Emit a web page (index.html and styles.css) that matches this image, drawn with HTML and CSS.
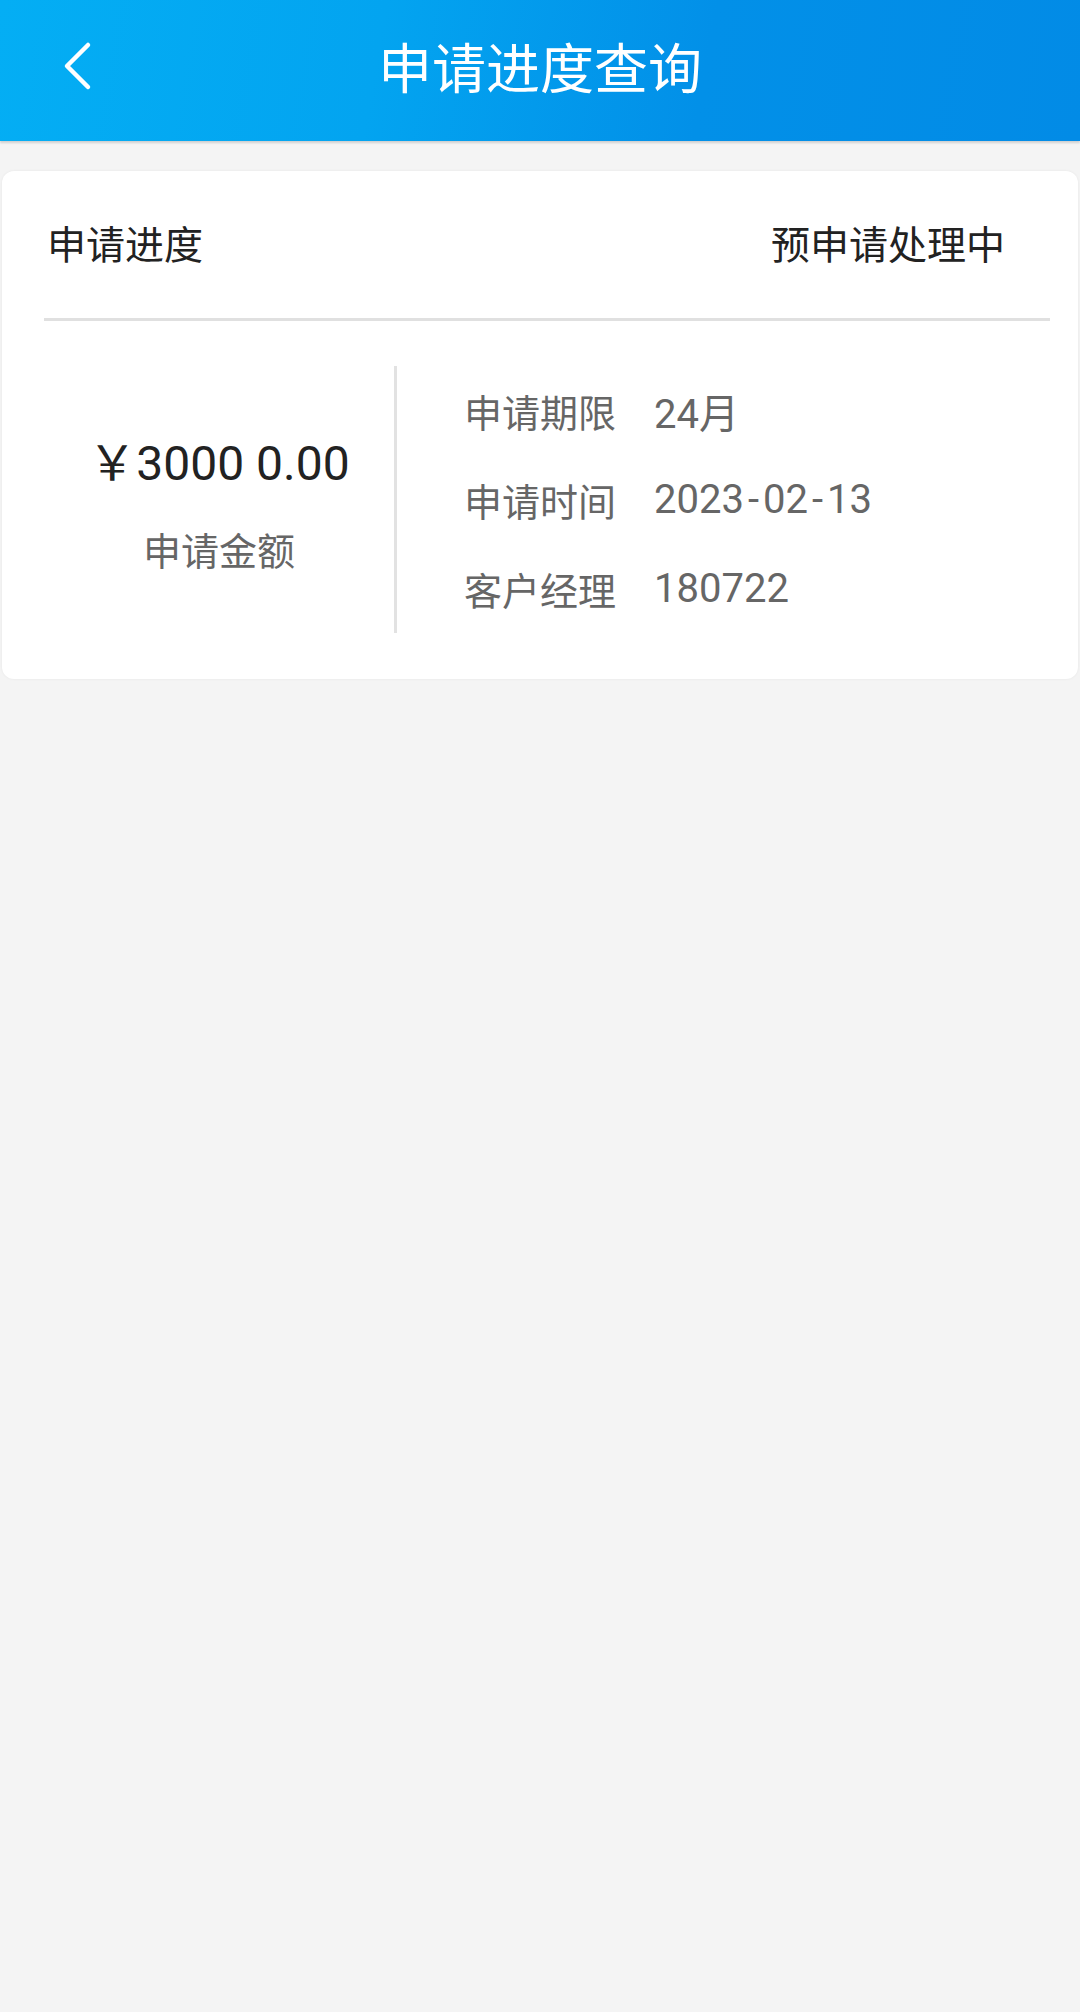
FILE: index.html
```html
<!DOCTYPE html>
<html lang="zh-CN">
<head>
  <meta charset="UTF-8" />
  <meta name="viewport" content="width=device-width, initial-scale=1.0" />
  <title>申请进度查询</title>
  <link rel="stylesheet" href="styles.css">
</head>
<body>

  <div class="header">
    <a class="back" href="#">
      <svg width="40" height="70" viewBox="0 0 40 70">
        <polyline points="30,15 9,36 30,57" fill="none" stroke="#fff" stroke-width="4.5" stroke-linecap="round" stroke-linejoin="round" />
      </svg>
    </a>
    <h1>申请进度查询</h1>
  </div>

  <div class="card">
    <div class="status-row">
      <span class="status-label">申请进度</span>
      <span class="status-value">预申请处理中</span>
    </div>

    <div class="detail">
      <div class="amount-box">
        <div class="amount">￥3000 0.00</div>
        <div class="amount-label">申请金额</div>
      </div>
      <div class="info">
        <div class="info-row"><span class="info-key">申请期限</span><span class="info-val">24月</span></div>
        <div class="info-row"><span class="info-key">申请时间</span><span class="info-val">2023<span class="dash">-</span>02<span class="dash">-</span>13</span></div>
        <div class="info-row"><span class="info-key">客户经理</span><span class="info-val">180722</span></div>
      </div>
    </div>
  </div>

</body>
</html>
```

FILE: styles.css
```css
body {
  margin: 0;
  min-height: 2012px;
  background: #f4f4f4;
  font-family: Roboto, "Noto Sans CJK SC", sans-serif;
}
.header {
  position: relative;
  height: 141px;
  box-sizing: border-box;
  padding-bottom: 10px;
  display: flex;
  align-items: center;
  justify-content: center;
  background: linear-gradient(100deg, #04aef4 0%, #03a4f0 35%, #0290e8 65%, #028be6 100%);
  box-shadow: 0 2px 2px rgba(0,0,0,0.15);
}
.header h1 {
  margin: 0;
  color: #fff;
  font-size: 54px;
  font-weight: normal;
}
.back {
  position: absolute;
  left: 58px;
  top: 30px;
}
.card {
  margin: 30px 2px 0;
  background: #fff;
  border-radius: 12px;
  padding: 0 28px 0 42px;
  box-shadow: 0 0 3px rgba(0,0,0,0.06);
}
.status-row {
  height: 150px;
  box-sizing: border-box;
  padding-bottom: 6px;
  display: flex;
  align-items: center;
  justify-content: space-between;
  border-bottom: 3px solid #e0e0e0;
  font-size: 39px;
  color: #222;
}
.status-label {
  margin-left: 3px;
}
.status-value {
  margin-right: 45px;
}
.detail {
  display: flex;
  padding: 45px 0 46px;
}
.amount-box {
  width: 350px;
  padding-top: 17px;
  border-right: 3px solid #e2e2e2;
  display: flex;
  flex-direction: column;
  justify-content: center;
  align-items: center;
  line-height: 89px;
}
.amount {
  font-size: 48px;
  color: #222;
}
.amount-label {
  font-size: 38px;
  color: #666;
}
.info {
  padding-left: 67px;
}
.info-row {
  height: 89px;
  display: flex;
  align-items: center;
  font-size: 38px;
  color: #666;
}
.info-key {
  margin-right: 38px;
}
.info-val {
  font-size: 40px;
}
.dash {
  padding: 0 4px;
}
```
